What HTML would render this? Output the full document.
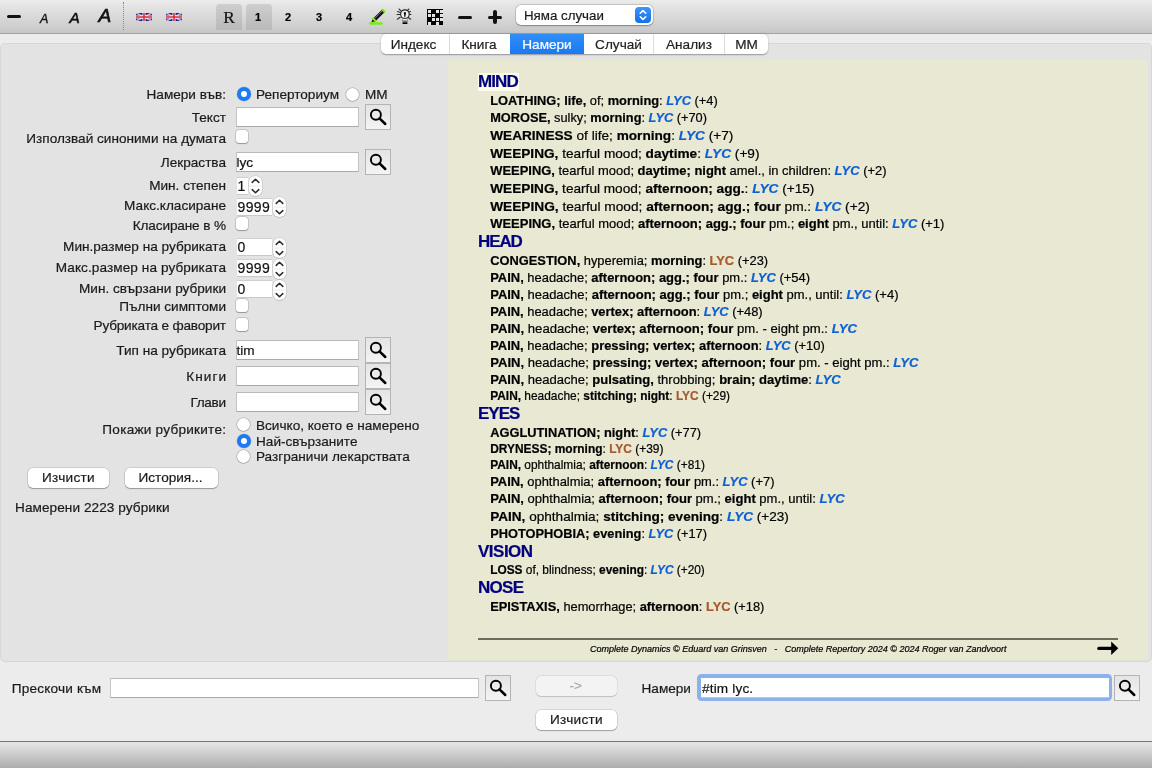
<!DOCTYPE html>
<html><head><meta charset="utf-8">
<style>
*{box-sizing:border-box}
html,body{margin:0;padding:0}
#root{-webkit-text-stroke:0.2px}
body{width:1152px;height:768px;overflow:hidden;position:relative;background:#ececec;font-family:"Liberation Sans",sans-serif;color:#000}
.a{position:absolute}
#tb{left:0;top:0;width:1152px;height:34px;background:linear-gradient(#ececec 0px,#e4e4e4 6px,#cfcfcf 26px,#c6c6c6 33px);border-bottom:1px solid #a4a4a4}
#tb .sep{left:123px;top:2px;width:1px;height:28px;border-left:1px dotted #8a8a8a}
.tbtn{border-radius:4px 4px 0 0;background:linear-gradient(#cecece,#b9b9b9)}
.dg{font-weight:bold;font-size:11px;line-height:0}
#panel{left:0;top:43px;width:1152px;height:619px;border:1px solid #d6d6d6;border-radius:5px;background:#e3e3e3}
#tabs{left:381px;top:34px;width:387px;height:20px;background:#fff;border-radius:5px;box-shadow:0 0.5px 1.5px rgba(0,0,0,.35);overflow:hidden}
#tabs div{position:absolute;top:0;height:20px;font-size:13.6px;line-height:21.6px;text-align:center;color:#222}
#tabs .s{border-left:1px solid #dcdcdc}
#yel{left:448px;top:60px;width:700px;height:599px;background:#e9e8d2}
.lb{font-size:13.6px;line-height:0;white-space:nowrap;color:#1a1a1a}
.r{right:926px;text-align:right}
.inp{background:#fff;border:1px solid #c4c4c4;border-bottom-color:#a9a9a9;border-top-color:#b9b9b9}
.sb{border:1px solid #b4b4b4;background:linear-gradient(#e4e4e4,#f4f4f4)}
.cb{width:12.3px;height:12.5px;border-radius:3px;background:#fff;box-shadow:0 0 0 0.5px rgba(0,0,0,.22),0 0.5px 1px rgba(0,0,0,.25)}
.rad{width:13px;height:13px;border-radius:50%;background:#fff;box-shadow:0 0 0 0.5px rgba(0,0,0,.25),0 0.5px 1px rgba(0,0,0,.25)}
.rad.on{width:14px;height:14px;background:#1b7bf4;box-shadow:0 0 0 0.5px rgba(0,0,0,.15)}
.rad.on:after{content:"";position:absolute;left:3.85px;top:3.85px;width:6.3px;height:6.3px;border-radius:50%;background:#fff}
.btn{background:#fff;border-radius:5px;box-shadow:0 0 0 0.5px rgba(0,0,0,.2),0 1px 1px rgba(0,0,0,.25);font-size:13.6px;text-align:center;color:#1a1a1a}
.t{line-height:0;white-space:nowrap;font-size:13px}
.t b,.t i.b{font-weight:bold}
.t i.b{color:#0d60d4}
.t .o{color:#a65a2b;font-weight:bold}
.h{line-height:0;white-space:nowrap;font-size:17px;font-weight:bold;color:#00007e}
</style></head><body>
<div id="root" style="position:absolute;left:0;top:0;width:1152px;height:768px;will-change:transform">
<div id="tb" class="a">
  <div class="a" style="left:7px;top:15px;width:14px;height:3.4px;border-radius:2px;background:#111"></div>
  <div class="a" style="left:40px;top:19px;font-size:12.5px;font-style:italic;line-height:0;color:#111;-webkit-text-stroke:0.35px">A</div>
  <div class="a" style="left:69.5px;top:18px;font-size:15.3px;font-style:italic;line-height:0;color:#111;-webkit-text-stroke:0.6px">A</div>
  <div class="a" style="left:98.5px;top:16px;font-size:19px;font-style:italic;line-height:0;color:#111;-webkit-text-stroke:0.7px">A</div>
  <div class="a sep"></div>
  <svg class="a" style="left:136px;top:13px" width="16" height="8" viewBox="0 0 16 8"><rect width="16" height="8" fill="#10288c"/><path d="M0 0L16 8M16 0L0 8" stroke="#fff" stroke-width="1.5"/><path d="M0 0L16 8M16 0L0 8" stroke="#e0384a" stroke-width="0.6"/><path d="M8 0V8M0 4H16" stroke="#fff" stroke-width="3"/><path d="M8 0V8M0 4H16" stroke="#d2283e" stroke-width="1.6"/></svg>
  <svg class="a" style="left:166px;top:13px" width="16" height="8" viewBox="0 0 16 8"><rect width="16" height="8" fill="#10288c"/><path d="M0 0L16 8M16 0L0 8" stroke="#fff" stroke-width="1.5"/><path d="M0 0L16 8M16 0L0 8" stroke="#e0384a" stroke-width="0.6"/><path d="M8 0V8M0 4H16" stroke="#fff" stroke-width="3"/><path d="M8 0V8M0 4H16" stroke="#d2283e" stroke-width="1.6"/></svg>
  <div class="a tbtn" style="left:216px;top:4px;width:26px;height:26px"></div>
  <div class="a" style="left:223.3px;top:18px;font-family:'Liberation Serif',serif;font-size:17.3px;line-height:0;color:#111">R</div>
  <div class="a tbtn" style="left:246px;top:4px;width:26px;height:26px"></div>
  <div class="a dg" style="left:255px;top:17px">1</div>
  <div class="a dg" style="left:285px;top:17px">2</div>
  <div class="a dg" style="left:316px;top:17px">3</div>
  <div class="a dg" style="left:346px;top:17px">4</div>
  <svg class="a" style="left:368px;top:8px" width="18" height="18" viewBox="0 0 18 18">
    <path d="M5.4 12.8L15.4 2.8" stroke="#111" stroke-width="3.6" stroke-linecap="butt"/>
    <path d="M5.6 11.5L14.4 2.7" stroke="#f4f4f4" stroke-width="0.9" stroke-dasharray="0.9 0.6"/>
    <path d="M14 1.2L17 4.2" stroke="#78ee10" stroke-width="2.2"/>
    <path d="M4.2 10L7.6 13.4" stroke="#78ee10" stroke-width="2.4"/>
    <path d="M3.2 14.6L4.6 11.6L6.6 13.6Z" fill="#222"/>
    <path d="M2.3 15.5H13.6" stroke="#78ee10" stroke-width="2.3" stroke-linecap="round"/>
  </svg>
  <svg class="a" style="left:392px;top:6px" width="24" height="22" viewBox="0 0 24 22">
    <g stroke="#2e2e2e" stroke-width="1.05" fill="none" stroke-linecap="round">
    <path d="M7 3L9.3 5.2M17 3L14.7 5.2M5.5 5.5L8.3 6.5M18.5 5.5L15.7 6.5M5 8.4H8M19 8.4H16M5.3 13.2L8.2 11.2M18.7 13.2L15.8 11.2"/>
    </g>
    <circle cx="12.9" cy="8.2" r="4.3" fill="#f2f2f2" stroke="#1a1a1a" stroke-width="1.1"/>
    <path d="M11.7 6.2H14.1L13.2 11.6H12.6Z" fill="#000"/>
    <rect x="10.4" y="12.6" width="5.2" height="5.2" rx="1" fill="#777"/>
    <rect x="10.9" y="13.1" width="4.2" height="1.2" fill="#f4f4f4"/>
    <rect x="10.6" y="16.6" width="4.8" height="1.5" rx="0.7" fill="#000"/>
  </svg>
  <svg class="a" style="left:427px;top:9px" width="16" height="16" viewBox="0 0 16 16" shape-rendering="crispEdges"><rect width="16" height="16" fill="#050505"/><g fill="#e4e4e4"><rect x="1" y="1" width="3" height="3"/><rect x="9" y="1" width="3" height="3"/><rect x="13" y="1" width="3" height="3"/><rect x="1" y="5" width="3" height="3"/><rect x="5" y="5" width="3" height="3"/><rect x="13" y="5" width="3" height="3"/><rect x="5" y="9" width="3" height="3"/><rect x="9" y="9" width="3" height="3"/><rect x="13" y="9" width="3" height="3"/><rect x="1" y="13" width="3" height="3"/><rect x="9" y="13" width="3" height="3"/></g></svg>
  <div class="a" style="left:458px;top:15.5px;width:14px;height:3.2px;border-radius:2px;background:#111"></div>
  <div class="a" style="left:488px;top:15.5px;width:14px;height:3.2px;border-radius:2px;background:#111"></div>
  <div class="a" style="left:493.4px;top:10px;width:3.2px;height:14px;border-radius:2px;background:#111"></div>
  <div class="a" style="left:516px;top:5px;width:137px;height:20px;border-radius:5px;background:#fff;box-shadow:0 0 0 0.5px rgba(0,0,0,.18),0 0.5px 1.5px rgba(0,0,0,.3)"></div>
  <div class="a lb" style="left:524px;top:16px;color:#1a1a1a;font-size:13.3px">Няма случаи</div>
  <div class="a" style="left:635px;top:7px;width:16px;height:16px;border-radius:4px;background:linear-gradient(#3d95fa,#1470ef)"></div>
  <svg class="a" style="left:635px;top:7px" width="16" height="16" viewBox="0 0 16 16"><path d="M5.2 6.2L8 3.6L10.8 6.2M5.2 9.8L8 12.4L10.8 9.8" stroke="#fff" stroke-width="1.5" fill="none" stroke-linecap="round" stroke-linejoin="round"/></svg>
</div>
<div id="panel" class="a"></div>
<div id="tabs" class="a">
  <div style="left:0;width:68px;text-indent:-3px">Индекс</div>
  <div class="s" style="left:68px;width:61px;text-indent:-2px">Книга</div>
  <div style="left:129px;width:74px;background:linear-gradient(#2f8ff8,#1a78f2);color:#fff">Намери</div>
  <div style="left:203px;width:69px">Случай</div>
  <div class="s" style="left:272px;width:71px">Анализ</div>
  <div class="s" style="left:343px;width:44px">ММ</div>
</div>
<div id="form">
<div class="a lb r" style="top:95px">Намери във:</div>
<div class="a rad on" style="left:237px;top:86.8px"></div>
<div class="a lb" style="left:256px;top:95px">Реперториум</div>
<div class="a rad" style="left:346px;top:87.5px"></div>
<div class="a lb" style="left:365px;top:95px">ММ</div>
<div class="a lb r" style="top:118px">Текст</div>
<div class="a inp" style="left:236px;top:107px;width:123px;height:20px"></div>
<div class="a sb" style="left:365px;top:104px;width:26px;height:25.5px"><svg width="24" height="24" viewBox="0 0 24 24" style="position:absolute;left:0;top:0"><circle cx="9.9" cy="9.8" r="5" fill="none" stroke="#000" stroke-width="1.9"/><path d="M13.5 13.4L19.3 19" stroke="#000" stroke-width="2.5" stroke-linecap="round"/></svg></div>
<div class="a lb r" style="top:139px">Използвай синоними на думата</div>
<div class="a cb" style="left:236px;top:130px"></div>
<div class="a lb r" style="top:163px">Лекраства</div>
<div class="a inp" style="left:236px;top:152px;width:123px;height:20px"></div>
<div class="a sb" style="left:365px;top:149px;width:26px;height:25.5px"><svg width="24" height="24" viewBox="0 0 24 24" style="position:absolute;left:0;top:0"><circle cx="9.9" cy="9.8" r="5" fill="none" stroke="#000" stroke-width="1.9"/><path d="M13.5 13.4L19.3 19" stroke="#000" stroke-width="2.5" stroke-linecap="round"/></svg></div>
<div class="a lb" style="left:236.5px;top:163px;color:#111">lyc</div>
<div class="a lb r" style="top:186px">Мин. степен</div>
<div class="a" style="left:236.5px;top:176.5px;width:11px;height:18px;background:#fff;border-top:1px solid #d0d0d0;border-bottom:1px solid #c8c8c8"></div><div class="a lb" style="left:237.5px;top:185.5px;font-size:14px;color:#111">1</div>
<div class="a" style="left:249px;top:176px;width:13px;height:20px;border-radius:6px;background:#fff;box-shadow:0 0 0 0.5px rgba(0,0,0,.12),0 0.5px 1px rgba(0,0,0,.2)"><svg width="13" height="20" viewBox="0 0 13 20" style="position:absolute;left:0;top:0"><path d="M3.2 6.4L6.5 3.2L9.8 6.4M3.2 13.6L6.5 16.8L9.8 13.6" stroke="#2a2a2a" stroke-width="1.5" fill="none" stroke-linecap="round" stroke-linejoin="round"/><path d="M0.5 10H12.5" stroke="#e8e8e8" stroke-width="1"/></svg></div>
<div class="a lb r" style="top:206px">Макс.класиране</div>
<div class="a" style="left:236.5px;top:197.5px;width:35px;height:18px;background:#fff;border-top:1px solid #d0d0d0;border-bottom:1px solid #c8c8c8"></div><div class="a lb" style="left:237.5px;top:206.5px;font-size:14px;color:#111;letter-spacing:0.4px">9999</div>
<div class="a" style="left:273px;top:197px;width:13px;height:20px;border-radius:6px;background:#fff;box-shadow:0 0 0 0.5px rgba(0,0,0,.12),0 0.5px 1px rgba(0,0,0,.2)"><svg width="13" height="20" viewBox="0 0 13 20" style="position:absolute;left:0;top:0"><path d="M3.2 6.4L6.5 3.2L9.8 6.4M3.2 13.6L6.5 16.8L9.8 13.6" stroke="#2a2a2a" stroke-width="1.5" fill="none" stroke-linecap="round" stroke-linejoin="round"/><path d="M0.5 10H12.5" stroke="#e8e8e8" stroke-width="1"/></svg></div>
<div class="a lb r" style="top:226px;letter-spacing:-0.133px;margin-right:0.133px">Класиране в %</div>
<div class="a cb" style="left:236px;top:217px"></div>
<div class="a lb r" style="top:247px">Мин.размер на рубриката</div>
<div class="a" style="left:236.5px;top:238px;width:35px;height:18px;background:#fff;border-top:1px solid #d0d0d0;border-bottom:1px solid #c8c8c8"></div><div class="a lb" style="left:237.5px;top:247px;font-size:14px;color:#111">0</div>
<div class="a" style="left:273px;top:238px;width:13px;height:20px;border-radius:6px;background:#fff;box-shadow:0 0 0 0.5px rgba(0,0,0,.12),0 0.5px 1px rgba(0,0,0,.2)"><svg width="13" height="20" viewBox="0 0 13 20" style="position:absolute;left:0;top:0"><path d="M3.2 6.4L6.5 3.2L9.8 6.4M3.2 13.6L6.5 16.8L9.8 13.6" stroke="#2a2a2a" stroke-width="1.5" fill="none" stroke-linecap="round" stroke-linejoin="round"/><path d="M0.5 10H12.5" stroke="#e8e8e8" stroke-width="1"/></svg></div>
<div class="a lb r" style="top:268px;letter-spacing:0.078px;margin-right:-0.078px">Макс.размер на рубриката</div>
<div class="a" style="left:236.5px;top:259px;width:35px;height:18px;background:#fff;border-top:1px solid #d0d0d0;border-bottom:1px solid #c8c8c8"></div><div class="a lb" style="left:237.5px;top:268px;font-size:14px;color:#111;letter-spacing:0.4px">9999</div>
<div class="a" style="left:273px;top:259px;width:13px;height:20px;border-radius:6px;background:#fff;box-shadow:0 0 0 0.5px rgba(0,0,0,.12),0 0.5px 1px rgba(0,0,0,.2)"><svg width="13" height="20" viewBox="0 0 13 20" style="position:absolute;left:0;top:0"><path d="M3.2 6.4L6.5 3.2L9.8 6.4M3.2 13.6L6.5 16.8L9.8 13.6" stroke="#2a2a2a" stroke-width="1.5" fill="none" stroke-linecap="round" stroke-linejoin="round"/><path d="M0.5 10H12.5" stroke="#e8e8e8" stroke-width="1"/></svg></div>
<div class="a lb r" style="top:289px">Мин. свързани рубрики</div>
<div class="a" style="left:236.5px;top:280px;width:35px;height:18px;background:#fff;border-top:1px solid #d0d0d0;border-bottom:1px solid #c8c8c8"></div><div class="a lb" style="left:237.5px;top:289px;font-size:14px;color:#111">0</div>
<div class="a" style="left:273px;top:280px;width:13px;height:20px;border-radius:6px;background:#fff;box-shadow:0 0 0 0.5px rgba(0,0,0,.12),0 0.5px 1px rgba(0,0,0,.2)"><svg width="13" height="20" viewBox="0 0 13 20" style="position:absolute;left:0;top:0"><path d="M3.2 6.4L6.5 3.2L9.8 6.4M3.2 13.6L6.5 16.8L9.8 13.6" stroke="#2a2a2a" stroke-width="1.5" fill="none" stroke-linecap="round" stroke-linejoin="round"/><path d="M0.5 10H12.5" stroke="#e8e8e8" stroke-width="1"/></svg></div>
<div class="a lb r" style="top:307px">Пълни симптоми</div>
<div class="a cb" style="left:236px;top:299px"></div>
<div class="a lb r" style="top:326px;letter-spacing:-0.194px;margin-right:0.194px">Рубриката е фаворит</div>
<div class="a cb" style="left:236px;top:318px"></div>
<div class="a lb r" style="top:351px">Тип на рубриката</div>
<div class="a inp" style="left:236px;top:340px;width:123px;height:20px"></div>
<div class="a sb" style="left:365px;top:337px;width:26px;height:25.5px"><svg width="24" height="24" viewBox="0 0 24 24" style="position:absolute;left:0;top:0"><circle cx="9.9" cy="9.8" r="5" fill="none" stroke="#000" stroke-width="1.9"/><path d="M13.5 13.4L19.3 19" stroke="#000" stroke-width="2.5" stroke-linecap="round"/></svg></div>
<div class="a lb" style="left:236.5px;top:351px;color:#111">tim</div>
<div class="a lb r" style="top:377px;letter-spacing:1.025px;margin-right:-1.025px">Книги</div>
<div class="a inp" style="left:236px;top:365.5px;width:123px;height:20px"></div>
<div class="a sb" style="left:365px;top:363px;width:26px;height:25.5px"><svg width="24" height="24" viewBox="0 0 24 24" style="position:absolute;left:0;top:0"><circle cx="9.9" cy="9.8" r="5" fill="none" stroke="#000" stroke-width="1.9"/><path d="M13.5 13.4L19.3 19" stroke="#000" stroke-width="2.5" stroke-linecap="round"/></svg></div>
<div class="a lb r" style="top:403px;letter-spacing:-0.350px;margin-right:0.350px">Глави</div>
<div class="a inp" style="left:236px;top:391.5px;width:123px;height:20px"></div>
<div class="a sb" style="left:365px;top:389px;width:26px;height:25.5px"><svg width="24" height="24" viewBox="0 0 24 24" style="position:absolute;left:0;top:0"><circle cx="9.9" cy="9.8" r="5" fill="none" stroke="#000" stroke-width="1.9"/><path d="M13.5 13.4L19.3 19" stroke="#000" stroke-width="2.5" stroke-linecap="round"/></svg></div>
<div class="a lb r" style="top:430px;letter-spacing:0.237px;margin-right:-0.237px">Покажи рубриките:</div>
<div class="a rad" style="left:237.4px;top:418.2px"></div>
<div class="a lb" style="left:256px;top:426px">Всичко, което е намерено</div>
<div class="a rad on" style="left:237px;top:434.2px"></div>
<div class="a lb" style="left:256px;top:442px">Най-свързаните</div>
<div class="a rad" style="left:237.4px;top:450.4px"></div>
<div class="a lb" style="left:256px;top:457px">Разграничи лекарствата</div>
<div class="a btn" style="left:28px;top:468px;width:81px;height:20px"></div>
<div class="a lb" style="left:42px;top:478px;letter-spacing:0.3px">Изчисти</div>
<div class="a btn" style="left:125px;top:468px;width:93px;height:20px"></div>
<div class="a lb" style="left:138.5px;top:478px">История...</div>
<div class="a lb" style="left:15px;top:508px;letter-spacing:0.07px">Намерени 2223 рубрики</div>
</div>
<div id="yel" class="a"></div>
<div id="content">
<div class="a" style="left:478px;top:73px;width:41px;height:18px;background:#fbfbee"></div>
<div class="a h" style="left:478px;top:82px;letter-spacing:-0.9px">MIND</div>
<div class="a t" style="left:490.2px;top:101px;font-size:12.85px"><b>LOATHING; life,</b> of; <b>morning</b>: <i class="b">LYC</i> (+4)</div>
<div class="a t" style="left:490.2px;top:118px;font-size:12.79px"><b>MOROSE,</b> sulky; <b>morning</b>: <i class="b">LYC</i> (+70)</div>
<div class="a t" style="left:490.2px;top:136px;font-size:13.64px"><b>WEARINESS</b> of life; <b>morning</b>: <i class="b">LYC</i> (+7)</div>
<div class="a t" style="left:490.2px;top:154px;font-size:13.65px"><b>WEEPING,</b> tearful mood; <b>daytime</b>: <i class="b">LYC</i> (+9)</div>
<div class="a t" style="left:490.2px;top:171px;font-size:12.94px"><b>WEEPING,</b> tearful mood; <b>daytime; night</b> amel., in children: <i class="b">LYC</i> (+2)</div>
<div class="a t" style="left:490.2px;top:189px;font-size:13.64px"><b>WEEPING,</b> tearful mood; <b>afternoon; agg.</b>: <i class="b">LYC</i> (+15)</div>
<div class="a t" style="left:490.2px;top:207px;font-size:13.7px"><b>WEEPING,</b> tearful mood; <b>afternoon; agg.; four</b> pm.: <i class="b">LYC</i> (+2)</div>
<div class="a t" style="left:490.2px;top:224px;font-size:12.97px"><b>WEEPING,</b> tearful mood; <b>afternoon; agg.; four</b> pm.; <b>eight</b> pm., until: <i class="b">LYC</i> (+1)</div>
<div class="a h" style="left:478px;top:242px;letter-spacing:-1.1px">HEAD</div>
<div class="a t" style="left:490.2px;top:261px;font-size:12.87px"><b>CONGESTION,</b> hyperemia; <b>morning</b>: <span class="o">LYC</span> (+23)</div>
<div class="a t" style="left:490.2px;top:278px;font-size:12.94px"><b>PAIN,</b> headache; <b>afternoon; agg.; four</b> pm.: <i class="b">LYC</i> (+54)</div>
<div class="a t" style="left:490.2px;top:295px;font-size:12.99px"><b>PAIN,</b> headache; <b>afternoon; agg.; four</b> pm.; <b>eight</b> pm., until: <i class="b">LYC</i> (+4)</div>
<div class="a t" style="left:490.2px;top:312px;font-size:12.92px"><b>PAIN,</b> headache; <b>vertex; afternoon</b>: <i class="b">LYC</i> (+48)</div>
<div class="a t" style="left:490.2px;top:329px;font-size:13.11px"><b>PAIN,</b> headache; <b>vertex; afternoon; four</b> pm. - eight pm.: <i class="b">LYC</i></div>
<div class="a t" style="left:490.2px;top:346px;font-size:12.93px"><b>PAIN,</b> headache; <b>pressing; vertex; afternoon</b>: <i class="b">LYC</i> (+10)</div>
<div class="a t" style="left:490.2px;top:363px;font-size:13.09px"><b>PAIN,</b> headache; <b>pressing; vertex; afternoon; four</b> pm. - eight pm.: <i class="b">LYC</i></div>
<div class="a t" style="left:490.2px;top:380px;font-size:13.06px"><b>PAIN,</b> headache; <b>pulsating,</b> throbbing; <b>brain; daytime</b>: <i class="b">LYC</i></div>
<div class="a t" style="left:490.2px;top:396px;font-size:11.92px"><b>PAIN,</b> headache; <b>stitching; night</b>: <span class="o">LYC</span> (+29)</div>
<div class="a h" style="left:478px;top:414px;letter-spacing:-1.0px">EYES</div>
<div class="a t" style="left:490.2px;top:433px;font-size:12.83px"><b>AGGLUTINATION; night</b>: <i class="b">LYC</i> (+77)</div>
<div class="a t" style="left:490.2px;top:449px;font-size:11.94px"><b>DRYNESS; morning</b>: <span class="o">LYC</span> (+39)</div>
<div class="a t" style="left:490.2px;top:465px;font-size:11.9px"><b>PAIN,</b> ophthalmia; <b>afternoon</b>: <i class="b">LYC</i> (+81)</div>
<div class="a t" style="left:490.2px;top:482px;font-size:12.93px"><b>PAIN,</b> ophthalmia; <b>afternoon; four</b> pm.: <i class="b">LYC</i> (+7)</div>
<div class="a t" style="left:490.2px;top:499px;font-size:13.04px"><b>PAIN,</b> ophthalmia; <b>afternoon; four</b> pm.; <b>eight</b> pm., until: <i class="b">LYC</i></div>
<div class="a t" style="left:490.2px;top:517px;font-size:13.59px"><b>PAIN,</b> ophthalmia; <b>stitching; evening</b>: <i class="b">LYC</i> (+23)</div>
<div class="a t" style="left:490.2px;top:534px;font-size:12.8px"><b>PHOTOPHOBIA; evening</b>: <i class="b">LYC</i> (+17)</div>
<div class="a h" style="left:478px;top:552px;letter-spacing:-0.5px">VISION</div>
<div class="a t" style="left:490.2px;top:570px;font-size:11.88px"><b>LOSS</b> of, blindness; <b>evening</b>: <i class="b">LYC</i> (+20)</div>
<div class="a h" style="left:478px;top:588px;letter-spacing:-0.7px">NOSE</div>
<div class="a t" style="left:490.2px;top:607px;font-size:12.84px"><b>EPISTAXIS,</b> hemorrhage; <b>afternoon</b>: <span class="o">LYC</span> (+18)</div>
<div class="a" style="left:478px;top:638px;width:640px;height:2px;background:#6b6b5e"></div>
<div class="a" style="left:590px;top:648.5px;font-size:9px;font-style:italic;line-height:0;white-space:nowrap;color:#000">Complete Dynamics © Eduard van Grinsven &nbsp;&nbsp;-&nbsp;&nbsp; Complete Repertory 2024 © 2024 Roger van Zandvoort</div>
<svg class="a" style="left:1097px;top:641px" width="22" height="15" viewBox="0 0 22 15"><path d="M1.8 7.4H15" stroke="#000" stroke-width="3.1" stroke-linecap="round"/><path d="M14.2 0.6L21.3 7.3L14.2 14Z" fill="#000"/></svg>
</div>
<div id="bottom">
<div class="a lb" style="left:11.7px;top:689px;letter-spacing:0.19px">Прескочи към</div>
<div class="a inp" style="left:109.7px;top:677.6px;width:369.5px;height:20px"></div>
<div class="a sb" style="left:485px;top:675px;width:26px;height:26px"><svg width="24" height="24" viewBox="0 0 24 24" style="position:absolute;left:0;top:0"><circle cx="9.9" cy="9.8" r="5" fill="none" stroke="#000" stroke-width="1.9"/><path d="M13.5 13.4L19.3 19" stroke="#000" stroke-width="2.5" stroke-linecap="round"/></svg></div>
<div class="a btn" style="left:536px;top:676px;width:81px;height:20px;background:#f3f3f3;box-shadow:0 0 0 0.5px rgba(0,0,0,.1),0 0.5px 1px rgba(0,0,0,.15)"></div>
<div class="a lb" style="left:569.5px;top:686px;color:#ababab">-&gt;</div>
<div class="a btn" style="left:536px;top:710px;width:81px;height:20px"></div>
<div class="a lb" style="left:550px;top:720px;letter-spacing:0.3px">Изчисти</div>
<div class="a lb" style="left:641.5px;top:689px">Намери</div>
<div class="a" style="left:697px;top:674px;width:415px;height:27px;border-radius:4.5px;background:#8ab3ec"></div>
<div class="a" style="left:701px;top:677.5px;width:407.5px;height:20px;background:#fff;border-bottom:1px solid #c4c4c4"></div>
<div class="a lb" style="left:702px;top:689px;color:#111;letter-spacing:0.16px">#tim lyc.</div>
<div class="a sb" style="left:1114px;top:675px;width:26px;height:26px"><svg width="24" height="24" viewBox="0 0 24 24" style="position:absolute;left:0;top:0"><circle cx="9.9" cy="9.8" r="5" fill="none" stroke="#000" stroke-width="1.9"/><path d="M13.5 13.4L19.3 19" stroke="#000" stroke-width="2.5" stroke-linecap="round"/></svg></div>
<div class="a" style="left:0;top:741px;width:1152px;height:27px;border-top:1px solid #767676;background:linear-gradient(#e6e6e6,#cbcbcb 50%,#acacac)"></div>
</div>
</div>
</body></html>
